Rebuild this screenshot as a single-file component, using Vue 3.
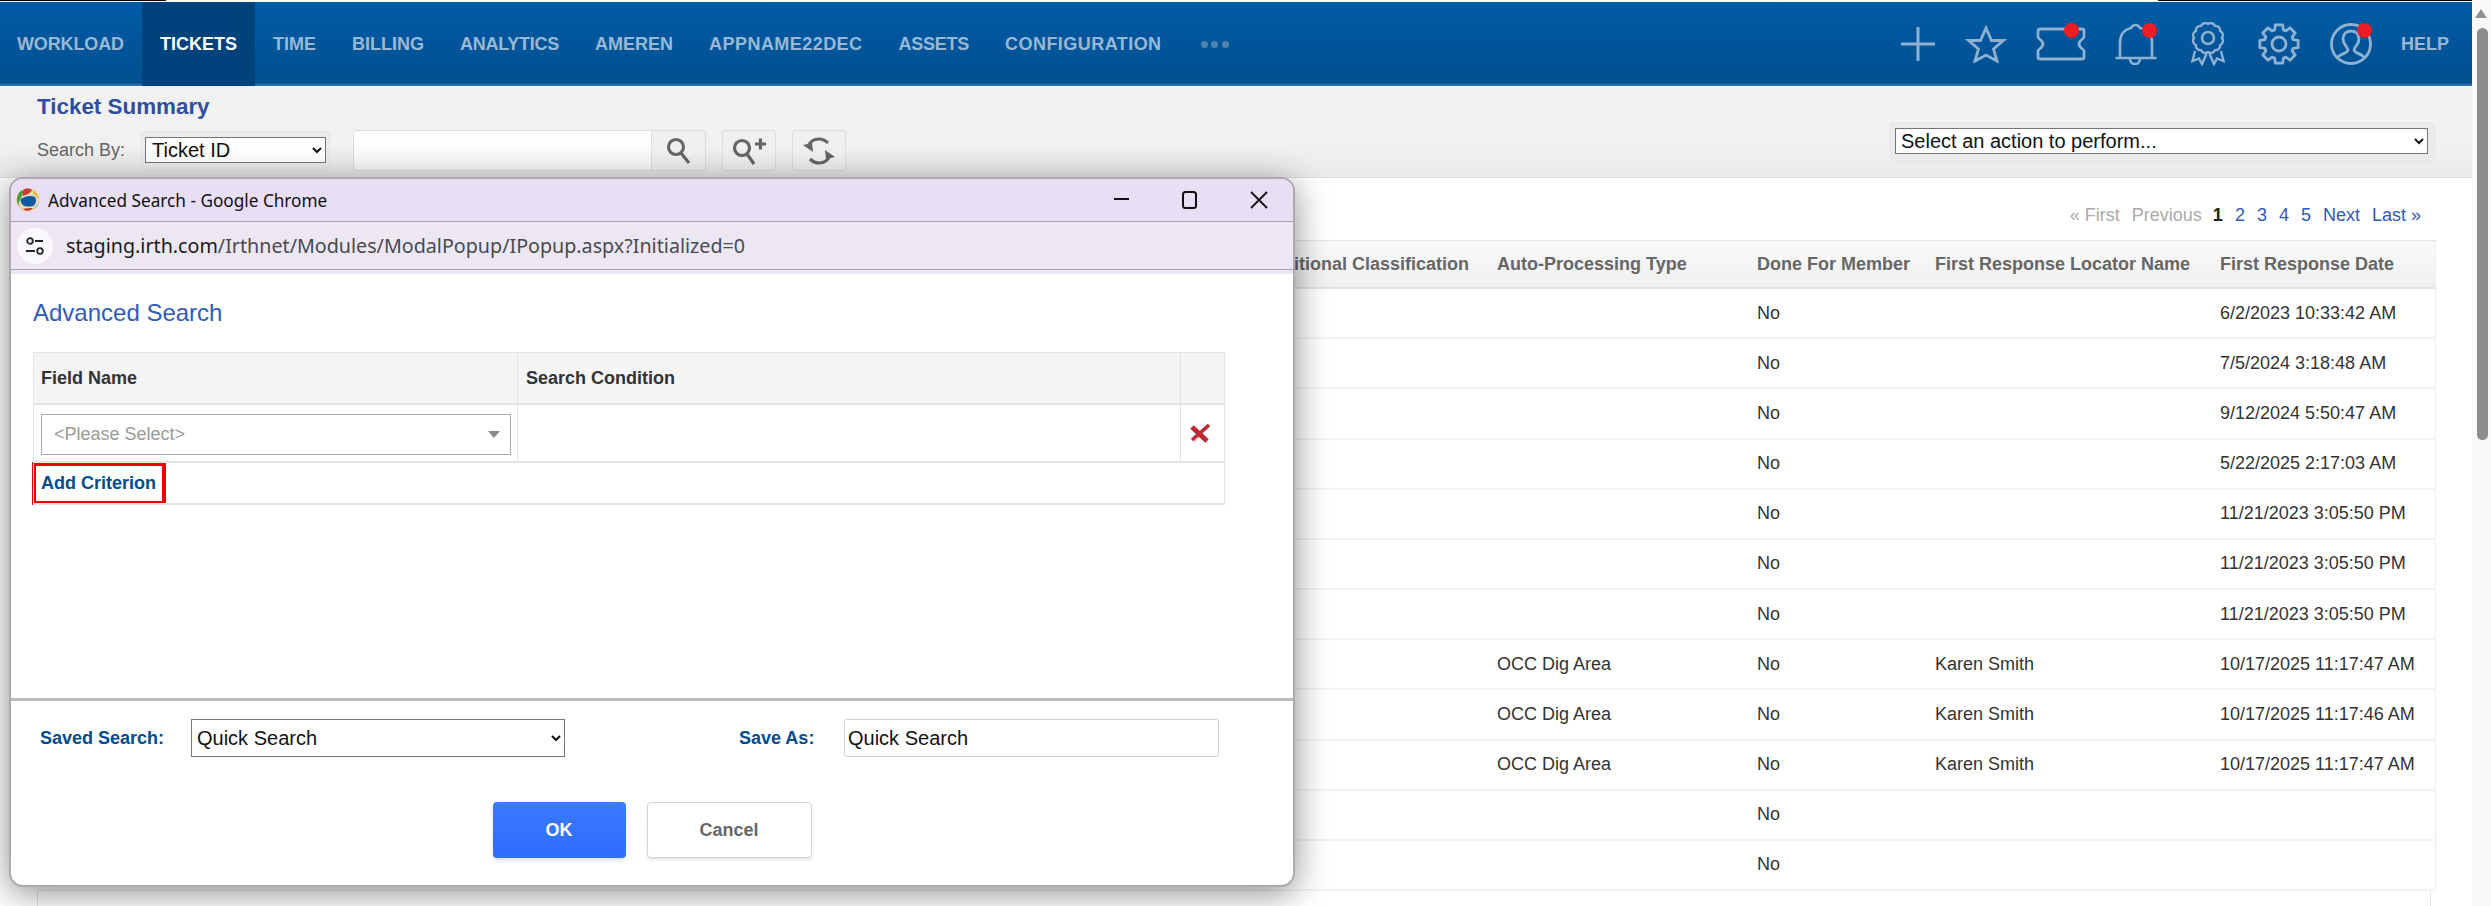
<script setup>
const navItems = [
  { label: 'WORKLOAD', cls: 'lead' },
  { label: 'TICKETS', cls: 'active' },
  { label: 'TIME', cls: '' },
  { label: 'BILLING', cls: '' },
  { label: 'ANALYTICS', cls: 'narrow' },
  { label: 'AMEREN', cls: '' },
  { label: 'APPNAME22DEC', cls: 'wide' },
  { label: 'ASSETS', cls: 'narrow' },
  { label: 'CONFIGURATION', cls: 'wide' }
]
const rows = [
  ['', '', 'No', '', '6/2/2023 10:33:42 AM'],
  ['', '', 'No', '', '7/5/2024 3:18:48 AM'],
  ['', '', 'No', '', '9/12/2024 5:50:47 AM'],
  ['', '', 'No', '', '5/22/2025 2:17:03 AM'],
  ['', '', 'No', '', '11/21/2023 3:05:50 PM'],
  ['', '', 'No', '', '11/21/2023 3:05:50 PM'],
  ['', '', 'No', '', '11/21/2023 3:05:50 PM'],
  ['', 'OCC Dig Area', 'No', 'Karen Smith', '10/17/2025 11:17:47 AM'],
  ['', 'OCC Dig Area', 'No', 'Karen Smith', '10/17/2025 11:17:46 AM'],
  ['', 'OCC Dig Area', 'No', 'Karen Smith', '10/17/2025 11:17:47 AM'],
  ['', '', 'No', '', ''],
  ['', '', 'No', '', '']
]

const gearPath = (() => {
  const c = 22
  const out = 19.5
  const root = 14.8
  let d = ''
  for (let i = 0; i < 8; i++) {
    const a = (i * Math.PI) / 4 - Math.PI / 2
    const pts = [
      [root, a - 0.3],
      [out, a - 0.19],
      [out, a + 0.19],
      [root, a + 0.3]
    ]
    pts.forEach(([r, t], j) => {
      const x = (c + r * Math.cos(t)).toFixed(2)
      const y = (c + r * Math.sin(t)).toFixed(2)
      d += (i === 0 && j === 0 ? 'M' : 'L') + x + ' ' + y
    })
  }
  return d + 'Z'
})()

const scallopPath = (() => {
  const cx = 22
  const cy = 16
  const r = 14
  const n = 12
  let d = ''
  for (let i = 0; i <= n; i++) {
    const t = (i * 2 * Math.PI) / n
    const x = (cx + r * Math.cos(t)).toFixed(2)
    const y = (cy + r * Math.sin(t)).toFixed(2)
    d += i === 0 ? `M${x} ${y}` : `A4.6 4.6 0 0 1 ${x} ${y}`
  }
  return d + 'Z'
})()
</script>

<template>
  <div class="page">
    <div class="main">
      <div class="topline"></div>
      <nav class="nav">
        <a v-for="item in navItems" :key="item.label" class="nav-item" :class="item.cls">{{ item.label }}</a>
        <span class="dots"><i></i><i></i><i></i></span>
        <div class="nav-right">
          <span class="ni n-plus">
            <svg width="34" height="34" viewBox="0 0 34 34"><path d="M17 0v34M0 17h34" class="st" stroke-width="3" /></svg>
          </span>
          <span class="ni n-star">
            <svg width="42" height="38" viewBox="0 0 42 38"><path d="M21 3l5.500 12.500H38.500L28.500 24 32 36 21 30 10 36l3.500-12L3.500 15.500H15.500z" class="st" stroke-width="2.800" /></svg>
          </span>
          <span class="ni n-ticket">
            <svg width="50" height="34" viewBox="0 0 50 34"><path d="M4 2H46a2 2 0 0 1 2 2v6c0 2-5 3-5 7s5 5 5 7v6a2 2 0 0 1-2 2H4a2 2 0 0 1-2-2v-6c0-2 5-3 5-7S2 12 2 10V4a2 2 0 0 1 2-2z" class="st" stroke-width="2.800" /></svg>
            <b class="dot d-ticket"></b>
          </span>
          <span class="ni n-bell">
            <svg width="44" height="42" viewBox="0 0 44 42"><path d="M6 35V20C6 10 12 6 17 5c1-2 2-3 4.500-3s3.500 1 4.500 3C32 6 38 10 38 20V35M1.500 35H42.500M16 36a5 5 0 0 0 10 0" class="st" stroke-width="2.600" /></svg>
            <b class="dot d-bell"></b>
          </span>
          <span class="ni n-ribbon">
            <svg width="44" height="44" viewBox="0 0 44 44"><path :d="scallopPath" class="st" stroke-width="2.400" /><circle cx="22" cy="16" r="6" class="st" stroke-width="2.600" /><path d="M9 29L6.500 39 13 36.500 16 42 20.500 32M35 29L37.500 39 31 36.500 28 42 23.500 32" class="st" stroke-width="2.400" /></svg>
          </span>
          <span class="ni n-gear">
            <svg width="44" height="44" viewBox="0 0 44 44"><path :d="gearPath" class="st" stroke-width="2.800" stroke-linejoin="round" /><circle cx="22" cy="22" r="7" class="st" stroke-width="2.800" /></svg>
          </span>
          <span class="ni n-user">
            <svg width="44" height="44" viewBox="0 0 44 44"><circle cx="22" cy="22" r="19.500" class="st" stroke-width="2.800" /><path d="M9 35C12 31 18 32 19 28 18 24 14 22 14 17 14 12 17 9 22 9 27 9 30 12 30 17 30 22 26 24 25 28 26 32 32 31 35 35" class="st" stroke-width="2.800" /></svg>
            <b class="dot d-user"></b>
          </span>
          <a class="help">HELP</a>
        </div>
      </nav>

      <header class="subhead">
        <div class="sub-left">
          <h1 class="sub-title">Ticket Summary</h1>
          <div class="search-row">
            <label class="by">Search By:</label>
            <div class="sel-panel">
              <select class="sel-ticket"><option>Ticket ID</option></select>
            </div>
            <input class="search-input" />
            <button class="ibtn first">
              <svg width="28" height="30" viewBox="0 0 28 30"><circle cx="11" cy="11" r="7.500" class="gi" /><path d="M16 17l8 10" class="gi" stroke-width="4" /></svg>
            </button>
            <button class="ibtn">
              <svg width="36" height="30" viewBox="0 0 36 30"><circle cx="11" cy="12" r="7.500" class="gi" /><path d="M16 18l7 10" class="gi" stroke-width="4" /><path d="M24 8h11M29.500 2.500v11" class="gi" /></svg>
            </button>
            <button class="ibtn">
              <svg width="34" height="34" viewBox="0 0 34 34"><path d="M6 13C8 7 13 5 17 5c4 0 7 2 9 4M28 21c-2 6-7 8-11 8-4 0-7-2-9-4" class="gi" /><path d="M1 11l9-2 1 9z M33 23l-9 2-1-9z" fill="#666" /></svg>
            </button>
          </div>
        </div>
        <div class="action-panel">
          <select class="sel-action"><option>Select an action to perform...</option></select>
        </div>
      </header>

      <section class="content">
        <div class="pager">
          <span class="off">« First</span>
          <span class="off">Previous</span>
          <b class="cur">1</b>
          <a>2</a><a>3</a><a>4</a><a>5</a>
          <a>Next</a><a>Last »</a>
        </div>
        <table class="grid">
          <colgroup>
            <col class="c0" /><col class="c1" /><col class="c2" /><col class="c3" /><col class="c4" /><col class="c5" />
          </colgroup>
          <thead>
            <tr>
              <th></th>
              <th>Additional Classification</th>
              <th>Auto-Processing Type</th>
              <th>Done For Member</th>
              <th>First Response Locator Name</th>
              <th>First Response Date</th>
            </tr>
          </thead>
          <tbody>
            <tr v-for="(r, i) in rows" :key="i">
              <td></td>
              <td>{{ r[0] }}</td>
              <td>{{ r[1] }}</td>
              <td>{{ r[2] }}</td>
              <td>{{ r[3] }}</td>
              <td>{{ r[4] }}</td>
            </tr>
          </tbody>
        </table>
        <div class="tools">
          <i class="t t1"></i><i class="t t2"></i><i class="t t3"></i><i class="t t4"></i><i class="t t5"></i>
        </div>
      </section>

      <div class="popup">
        <div class="win-title">
          <svg class="logo" width="24" height="24" viewBox="0 0 24 24">
            <circle cx="12" cy="12" r="11.800" fill="#e8d9b0" />
            <path d="M1 12C1 7 3 4 6 2c1 3 0 7-2 10s-2 6 0 8C2 18 1 15 1 12z" fill="#4f9a3e" />
            <path d="M7 2c3-2 7-2 9 0-1 3-6 5-9 6-1-2-1-4 0-6z" fill="#c8392f" />
            <path d="M17 2c3 2 6 5 6 9-2-1-3-4-6-5z" fill="#e8b93a" />
            <path d="M5 11c4-3 10-4 14-2 2 3 1 7-2 9-4 1-9 1-11-2-1-2-2-3-1-5z" fill="#0c5aa6" />
            <path d="M7 21c3-1 8-1 10-1-2 3-7 4-10 1z" fill="#c8392f" />
            <path d="M19 19c2-2 3-4 4-6 0 3-1 6-4 8z" fill="#a5c7e6" />
          </svg>
          <span class="win-text">Advanced Search - Google Chrome</span>
          <div class="win-ctl">
            <svg width="16" height="16" viewBox="0 0 16 16"><path d="M0 7h15" stroke="#111" stroke-width="2" /></svg>
            <svg width="16" height="18" viewBox="0 0 16 18"><rect x="1" y="1" width="13" height="16" rx="2.500" fill="none" stroke="#111" stroke-width="2" /></svg>
            <svg width="18" height="18" viewBox="0 0 18 18"><path d="M1 1l16 16M17 1L1 17" stroke="#111" stroke-width="1.800" fill="none" /></svg>
          </div>
        </div>
        <div class="win-addr">
          <span class="tune">
            <svg width="20" height="20" viewBox="0 0 20 20"><circle cx="5" cy="5" r="2.800" fill="none" stroke="#222" stroke-width="1.800" /><path d="M10 5h8M1 15h9" stroke="#222" stroke-width="1.800" /><circle cx="15" cy="15" r="2.800" fill="none" stroke="#222" stroke-width="1.800" /></svg>
          </span>
          <span class="url"><span class="host">staging.irth.com</span>/Irthnet/Modules/ModalPopup/IPopup.aspx?Initialized=0</span>
        </div>
        <div class="win-strip"></div>
        <div class="pop-body">
          <h2 class="pop-title">Advanced Search</h2>
          <table class="crit">
            <colgroup><col class="k0" /><col class="k1" /><col class="k2" /></colgroup>
            <thead>
              <tr><th>Field Name</th><th>Search Condition</th><th></th></tr>
            </thead>
            <tbody>
              <tr class="r-main">
                <td>
                  <div class="combo"><span>&lt;Please Select&gt;</span><i class="caret"></i></div>
                </td>
                <td></td>
                <td class="del">
                  <svg width="22" height="20" viewBox="0 0 22 20"><path d="M4 6l15 14M19 4L5 19" stroke="#999" stroke-width="3" fill="none" opacity=".35" /><path d="M3 4l15 14" stroke="#bc2a30" stroke-width="5" fill="none" /><path d="M20 2L3 17" stroke="#bc2a30" stroke-width="3.500" fill="none" /></svg>
                </td>
              </tr>
              <tr class="r-add">
                <td colspan="3"><a class="add">Add Criterion</a></td>
              </tr>
            </tbody>
          </table>
        </div>
        <div class="pop-foot">
          <div class="fields">
            <label class="f-lab">Saved Search:</label>
            <select class="f-sel"><option>Quick Search</option></select>
            <label class="f-lab save-lab">Save As:</label>
            <input class="f-inp" value="Quick Search" />
          </div>
          <div class="btns">
            <button class="ok">OK</button>
            <button class="cancel">Cancel</button>
          </div>
        </div>
      </div>
    </div>
    <aside class="scrollbar">
      <i class="up"></i>
      <i class="thumb"></i>
    </aside>
  </div>
</template>

<style scoped>
.page {
  display: flex;
  width: 2491px;
  height: 906px;
  overflow: hidden;
  background: #fff;
  font-family: "Liberation Sans", Arial, sans-serif;
  font-size: 18px;
  color: #333;
}
.main {
  position: relative;
  width: 2472px;
  flex: none;
  display: flex;
  flex-direction: column;
}
.topline {
  height: 2px;
  flex: none;
  background:
    linear-gradient(to right, #000 166px, transparent 166px, transparent 2158px, #000 2158px) top / 100% 1px no-repeat,
    #fff;
}
.nav {
  height: 84px;
  flex: none;
  display: flex;
  align-items: stretch;
  background: linear-gradient(#005ca6, #004f8f 96%, #3c7cb0);
}
.nav-item {
  display: flex;
  align-items: center;
  padding: 0 18px;
  font-weight: 700;
  color: #9ab8d6;
}
.nav-item.lead {
  padding-left: 17px;
  letter-spacing: -.13px;
}
.nav-item.active {
  color: #fff;
  background: #00427a;
}
.nav-item.wide { letter-spacing: .45px; }
.nav-item.narrow { letter-spacing: -.25px; }
.dots {
  display: flex;
  align-items: center;
  gap: 3.500px;
  margin-left: 21px;
}
.dots i {
  width: 7px;
  height: 7px;
  border-radius: 50%;
  background: #4f83b1;
}
.nav-right {
  margin-left: auto;
  display: flex;
  align-items: center;
  padding-right: 23px;
}
.ni {
  position: relative;
  height: 44px;
  display: flex;
  justify-content: center;
  align-items: center;
}
.n-plus { width: 68px; }
.n-star { width: 68px; }
.n-ticket { width: 82px; }
.n-bell { width: 68px; }
.n-ribbon { width: 76px; }
.n-gear { width: 66px; }
.n-user { width: 78px; }
.st {
  fill: none;
  stroke: #8fb2d3;
}
.dot {
  position: absolute;
  top: 1px;
  width: 15px;
  height: 15px;
  border-radius: 50%;
  background: #ee1c25;
}
.d-ticket { left: 44px; }
.d-bell { left: 40px; }
.d-user { left: 45px; }
.help {
  margin-left: 11px;
  font-weight: 700;
  color: #9ab8d6;
}
.subhead {
  height: 92px;
  flex: none;
  box-sizing: border-box;
  padding: 8px 37px 0;
  display: flex;
  justify-content: space-between;
  background: linear-gradient(#f1f1f1 60%, #ebebeb);
  border-bottom: 1px solid #ddd;
}
.sub-title {
  margin: 0;
  padding-top: 1px;
  font-size: 22.400px;
  line-height: 24px;
  font-weight: 700;
  color: #2f4ea1;
}
.search-row {
  display: flex;
  align-items: center;
  margin-top: 11px;
  height: 41px;
}
.by {
  width: 104px;
  color: #666;
}
.sel-panel {
  box-sizing: border-box;
  width: 189px;
  height: 40px;
  padding: 5px 3px;
  margin-right: 23px;
  background: #ececec;
  border: 1px solid #e6e6e6;
  border-radius: 3px;
}
.sel-ticket {
  display: block;
  width: 181px;
  height: 26px;
  box-sizing: border-box;
  padding-left: 2px;
  font: 20px "Liberation Sans", Arial, sans-serif;
  background: #fff;
  color: #111;
}
.search-input {
  box-sizing: border-box;
  width: 299px;
  height: 41px;
  border: 1px solid #ddd;
  border-radius: 3px 0 0 3px;
  background: linear-gradient(#fff, #f8f8f8);
  outline: none;
}
.ibtn {
  box-sizing: border-box;
  width: 54px;
  height: 41px;
  margin-left: 16px;
  padding: 0;
  display: flex;
  align-items: center;
  justify-content: center;
  background: #f0f0f0;
  border: 1px solid #dcdcdc;
  border-radius: 3px;
}
.ibtn.first {
  margin-left: 0;
  border-left: none;
  border-radius: 0 3px 3px 0;
}
.gi {
  fill: none;
  stroke: #666;
  stroke-width: 3.200;
}
.action-panel {
  box-sizing: border-box;
  align-self: flex-start;
  width: 545px;
  height: 40px;
  margin-top: 28px;
  padding: 5px 6px 0 4px;
  background: #ebebeb;
  border: 1px solid #e6e6e6;
  border-radius: 3px;
}
.sel-action {
  display: block;
  width: 100%;
  height: 26px;
  box-sizing: border-box;
  padding-left: 1px;
  font: 20px "Liberation Sans", Arial, sans-serif;
  background: #fff;
  color: #111;
}
.content {
  flex: 1;
  min-height: 0;
  padding: 0 37px;
  background: #fff;
}
.pager {
  height: 62px;
  box-sizing: border-box;
  padding: 12px 14px 0 0;
  display: flex;
  justify-content: flex-end;
  align-items: center;
  gap: 12px;
  color: #2f59b5;
}
.pager .off { color: #aaa; }
.pager .cur { color: #222; margin-left: -1px; }
.grid {
  width: 2398px;
  border-collapse: collapse;
  table-layout: fixed;
  border-right: 1px solid #eee;
}
.c0 { width: 1214px; }
.c1 { width: 238px; }
.c2 { width: 260px; }
.c3 { width: 178px; }
.c4 { width: 285px; }
.c5 { width: 223px; }
.grid th {
  height: 46px;
  padding: 0 0 0 8px;
  text-align: left;
  font-weight: 700;
  color: #666;
  white-space: nowrap;
  background: linear-gradient(#fafafa, #efefef);
  border-top: 1px solid #e6e6e6;
  border-bottom: 2px solid #e3e3e3;
}
.grid td {
  height: 50.180px;
  box-sizing: border-box;
  padding: 0 0 0 8px;
  white-space: nowrap;
  color: #333;
  border-bottom: 2px solid #f3f3f3;
}
.tools {
  display: flex;
  box-sizing: border-box;
  height: 20px;
  margin-right: 4px;
  padding: 15px 0 0 10px;
  border-left: 1px solid #e2e2e2;
  border-right: 1px solid #e6e6e6;
}
.t {
  display: block;
  height: 12px;
  box-sizing: border-box;
}
.t1 { width: 17px; border: 2px solid #777; border-radius: 4px 4px 0 0; }
.t2 { width: 10px; margin-left: 33px; background: #1f7a36; }
.t3 { width: 16px; margin-left: 42px; background: #cfc20f; border-radius: 8px 8px 0 0; }
.t4 { width: 13px; margin-left: 39px; background: #2b4f9c; border-radius: 7px 7px 0 0; }
.t5 { width: 9px; margin-left: 45px; background: #555; border-radius: 5px 5px 0 0; }
.popup {
  position: absolute;
  left: 9px;
  top: 177px;
  width: 1286px;
  height: 710px;
  box-sizing: border-box;
  display: flex;
  flex-direction: column;
  background: #fff;
  border: 2px solid #ababab;
  border-radius: 14px;
  overflow: hidden;
  box-shadow: 0 6px 34px rgba(0, 0, 0, .45);
}
.win-title {
  height: 43px;
  flex: none;
  box-sizing: border-box;
  display: flex;
  align-items: center;
  padding-left: 5px;
  background: #e9dff5;
  border-bottom: 1px solid #a9a5ad;
}
.logo { flex: none; }
.win-text {
  margin-left: 8px;
  font-family: "Noto Sans", "Open Sans", sans-serif;
  font-size: 17.200px;
  color: #111;
}
.win-ctl {
  margin-left: auto;
  display: flex;
  align-items: center;
  gap: 52px;
  padding-right: 25px;
}
.win-addr {
  height: 48px;
  flex: none;
  box-sizing: border-box;
  display: flex;
  align-items: center;
  padding-left: 6px;
  background: #ece7f3;
  border-bottom: 1px solid #a9a5ad;
}
.tune {
  width: 36px;
  height: 36px;
  border-radius: 50%;
  background: #fbf8fd;
  display: flex;
  align-items: center;
  justify-content: center;
}
.url {
  margin-left: 13px;
  font-family: "Noto Sans", "Open Sans", sans-serif;
  font-size: 19.700px;
  color: #4a4a4f;
  white-space: nowrap;
}
.host { color: #1a1a1f; }
.win-strip {
  height: 4px;
  flex: none;
  background: #ece7f3;
}
.pop-body {
  flex: 1;
  min-height: 0;
  padding: 24px 0 0 22px;
}
.pop-title {
  margin: 0 0 24px;
  font-size: 24px;
  line-height: 30px;
  font-weight: 400;
  color: #2f5bb7;
}
.crit {
  width: 1191px;
  border-collapse: collapse;
  table-layout: fixed;
}
.k0 { width: 484px; }
.k1 { width: 663px; }
.k2 { width: 44px; }
.crit th {
  height: 50px;
  padding: 0 0 0 8px;
  text-align: left;
  font-weight: 700;
  color: #333;
  background: #f5f5f5;
  border: 1px solid #e4e4e4;
  border-bottom-width: 2px;
}
.crit th:first-child { padding-left: 7px; }
.crit td {
  padding: 0;
  border: 1px solid #e4e4e4;
  border-bottom-width: 2px;
}
.r-main td { height: 56px; }
.combo {
  box-sizing: border-box;
  display: flex;
  align-items: center;
  justify-content: space-between;
  width: 470px;
  height: 41px;
  margin: 2px 0 0 7px;
  padding: 0 10px 0 12px;
  border: 1px solid #aaa;
  color: #999;
}
.caret {
  width: 0;
  height: 0;
  border-left: 6px solid transparent;
  border-right: 6px solid transparent;
  border-top: 7px solid #888;
}
.del svg {
  display: block;
  margin-left: 8px;
  filter: blur(.5px);
}
.add {
  box-sizing: border-box;
  display: flex;
  align-items: center;
  width: 134px;
  height: 43px;
  margin: -1px 0 -2px -2px;
  padding-left: 5px;
  border: 4px solid #f00000;
  font-weight: 700;
  color: #004c8c;
}
.pop-foot {
  flex: none;
  height: 187px;
  box-sizing: border-box;
  padding-top: 18px;
  border-top: 3px solid #bdbdbd;
}
.fields {
  display: flex;
  align-items: center;
  padding-left: 29px;
}
.f-lab {
  width: 151px;
  font-weight: 700;
  color: #004c8c;
}
.save-lab {
  width: 105px;
  margin-left: 174px;
}
.f-sel {
  box-sizing: border-box;
  width: 374px;
  height: 38px;
  padding-left: 1px;
  font: 20px "Liberation Sans", Arial, sans-serif;
  background: #fff;
  color: #111;
}
.f-inp {
  box-sizing: border-box;
  width: 375px;
  height: 38px;
  padding: 0 3px;
  font: 20px "Liberation Sans", Arial, sans-serif;
  color: #111;
  border: 1px solid #d0d0d0;
  border-radius: 3px;
  outline: none;
}
.btns {
  display: flex;
  justify-content: center;
  gap: 21px;
  margin-top: 45px;
}
.ok, .cancel {
  height: 56px;
  border-radius: 4px;
  font: 700 18px "Liberation Sans", Arial, sans-serif;
}
.ok {
  width: 133px;
  border: none;
  color: #fff;
  background: linear-gradient(#3a7cff, #2f6cff);
  box-shadow: 0 2px 4px rgba(0, 0, 0, .15);
}
.cancel {
  width: 165px;
  color: #666;
  background: #fff;
  border: 1px solid #d4d4d4;
  box-shadow: 0 2px 3px rgba(0, 0, 0, .1);
}
.scrollbar {
  position: relative;
  width: 19px;
  flex: none;
  background: #f8f8f8;
}
.up {
  position: absolute;
  left: 3px;
  top: 9px;
  width: 0;
  height: 0;
  border-left: 6px solid transparent;
  border-right: 6px solid transparent;
  border-bottom: 9px solid #8f8f8f;
}
.thumb {
  position: absolute;
  left: 5px;
  top: 28px;
  width: 11px;
  height: 412px;
  background: #8c8c8c;
  border-radius: 6px;
}
</style>

<style>
html, body { margin: 0; overflow: hidden; background: #fff; }
</style>
